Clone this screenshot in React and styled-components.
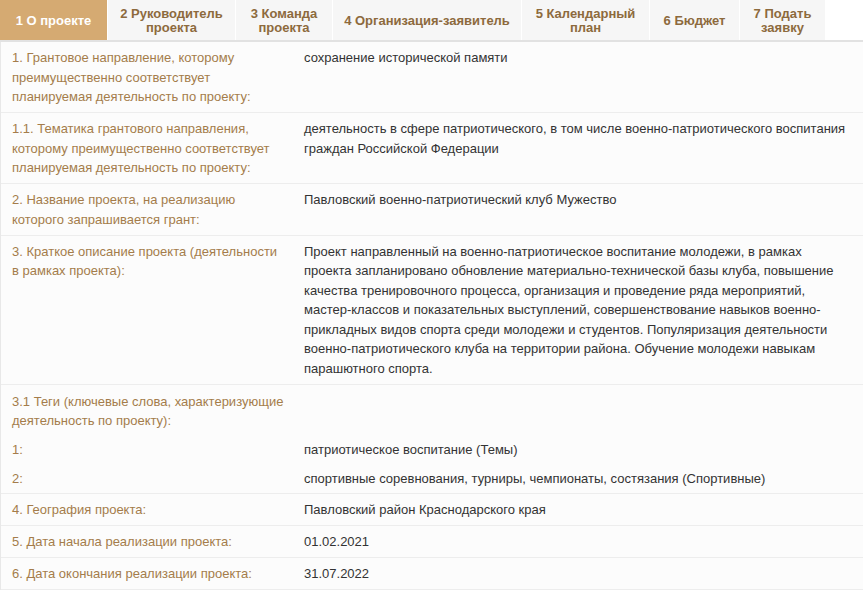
import React from 'react'
import styled, { createGlobalStyle } from 'styled-components'

const GlobalStyle = createGlobalStyle`
  body {
    margin: 0;
    background: #fff;
    font-family: "Liberation Sans", Arial, sans-serif;
  }
`

const tabs = [
  { title: ['1 О проекте'], width: 107, active: true },
  { title: ['2 Руководитель', 'проекта'], width: 127 },
  { title: ['3 Команда', 'проекта'], width: 96 },
  { title: ['4 Организация-заявитель'], width: 188 },
  { title: ['5 Календарный', 'план'], width: 127 },
  { title: ['6 Бюджет'], width: 89 },
  { title: ['7 Подать', 'заявку'], width: 85 },
]

const rows = [
  {
    label: '1. Грантовое направление, которому преимущественно соответствует планируемая деятельность по проекту:',
    value: 'сохранение исторической памяти',
  },
  {
    label: '1.1. Тематика грантового направления, которому преимущественно соответствует планируемая деятельность по проекту:',
    value: 'деятельность в сфере патриотического, в том числе военно-патриотического воспитания граждан Российской Федерации',
  },
  {
    label: '2. Название проекта, на реализацию которого запрашивается грант:',
    value: 'Павловский военно-патриотический клуб Мужество',
  },
  {
    label: '3. Краткое описание проекта (деятельности в рамках проекта):',
    value: 'Проект направленный на военно-патриотическое воспитание молодежи, в рамках проекта запланировано обновление материально-технической базы клуба, повышение качества тренировочного процесса, организация и проведение ряда мероприятий, мастер-классов и показательных выступлений, совершенствование навыков военно-прикладных видов спорта среди молодежи и студентов. Популяризация деятельности военно-патриотического клуба на территории района. Обучение молодежи навыкам парашютного спорта.',
  },
]

const tags = [
  'патриотическое воспитание (Темы)',
  'спортивные соревнования, турниры, чемпионаты, состязания (Спортивные)',
]

const tailRows = [
  { label: '4. География проекта:', value: 'Павловский район Краснодарского края' },
  { label: '5. Дата начала реализации проекта:', value: '01.02.2021' },
  { label: '6. Дата окончания реализации проекта:', value: '31.07.2022' },
]

const Page = styled.div`
  width: 863px;
  font-size: 13px;
  line-height: 19.5px;
`

const TabBar = styled.nav`
  display: flex;
  gap: 1px;
  height: 40px;
  border-bottom: 2px solid #e2e2e2;
  background: #fff;
`

const Tab = styled.div`
  width: ${props => props.width}px;
  flex: none;
  display: flex;
  align-items: center;
  justify-content: center;
  padding-top: 2px;
  box-sizing: border-box;
  text-align: center;
  font-weight: 700;
  font-size: 13px;
  line-height: 14px;
  color: ${props => props.active ? '#fff' : '#8d6a3d'};
  background: ${props => props.active ? '#d5aa72' : '#f6f6f6'};
`

const Table = styled.div`
  background: #fcfcfc;
  border-left: 1px solid #e8e8e8;
`

const Row = styled.div`
  display: grid;
  grid-template-columns: 291px 1fr;
  border-bottom: 1px solid #ededed;
`

const Label = styled.div`
  padding: 6px 10px 5.5px 11px;
  color: #a47c4b;
`

const Value = styled.div`
  padding: 6px 12px 5.5px 12px;
  color: #333;
`

const TagGroup = styled.div`
  border-bottom: 1px solid #ededed;
  padding: 7px 0 4.5px;
`

const TagTitle = styled.div`
  width: 276px;
  padding-left: 11px;
  color: #a47c4b;
`

const TagItem = styled.div`
  display: grid;
  grid-template-columns: 291px 1fr;
  padding-top: 9.5px;
`

const TagNumber = styled.div`
  padding-left: 11px;
  color: #a47c4b;
`

const TagValue = styled.div`
  padding: 0 12px;
  color: #333;
`

const App = () => {
  return (
    <Page>
      <GlobalStyle />

      <TabBar>
        {tabs.map(tab => (
          <Tab key={tab.title[0]} width={tab.width} active={tab.active}>
            <span>
              {tab.title.map((line, i) => (
                <React.Fragment key={line}>
                  {i > 0 && <br />}
                  {line}
                </React.Fragment>
              ))}
            </span>
          </Tab>
        ))}
      </TabBar>

      <Table>
        {rows.map(row => (
          <Row key={row.label}>
            <Label>{row.label}</Label>
            <Value>{row.value}</Value>
          </Row>
        ))}

        <TagGroup>
          <TagTitle>3.1 Теги (ключевые слова, характеризующие деятельность по проекту):</TagTitle>
          {tags.map((tag, i) => (
            <TagItem key={tag}>
              <TagNumber>{i + 1}:</TagNumber>
              <TagValue>{tag}</TagValue>
            </TagItem>
          ))}
        </TagGroup>

        {tailRows.map(row => (
          <Row key={row.label}>
            <Label>{row.label}</Label>
            <Value>{row.value}</Value>
          </Row>
        ))}
      </Table>
    </Page>
  )
}

export default App
